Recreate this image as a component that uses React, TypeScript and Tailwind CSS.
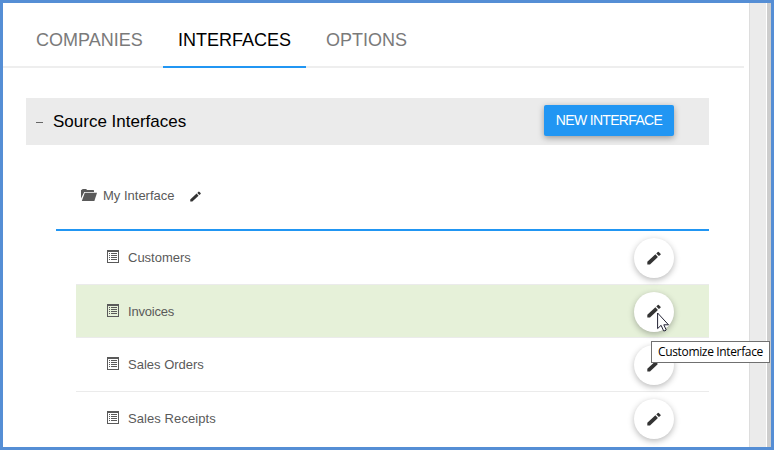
import React from "react";

const tabs = [
  { label: "COMPANIES", active: false, box: "w-[141px] pl-[14px]" },
  { label: "INTERFACES", active: true, box: "w-[143px] pl-[15px]" },
  { label: "OPTIONS", active: false, box: "w-[121px] pl-[20px]" },
];

const rows = [
  { label: "Customers", row: "h-[54px] border-b", icon: "mb-[2px]", text: "tracking-[0px]" },
  { label: "Invoices", row: "h-[53px] border-b bg-[#e6f1d9]", icon: "mb-px", text: "tracking-[-0.2px] pt-px" },
  { label: "Sales Orders", row: "h-[54px] border-b", icon: "mb-[2px]", text: "tracking-[0px]" },
  { label: "Sales Receipts", row: "h-[53px]", icon: "mb-[2px]", text: "tracking-[0.08px]" },
];

function Pencil({ className }: { className: string }) {
  return (
    <svg viewBox="0 0 14 14" className={className} fill="#333">
      <path d="M0.3 13.5v-2.8l8.1-7.4 2.5 2.6-7.9 7.6z" />
      <path d="M9.3 2.5 10.8 1q.5-.5 1 0l1.7 1.7q.5.5 0 1l-1.6 1.4z" />
    </svg>
  );
}

function ListIcon({ className }: { className: string }) {
  return (
    <svg
      viewBox="0 0 12 13"
      className={`${className} h-[13px] w-3 shrink-0`}
      shapeRendering="crispEdges"
      fill="#5a5a5a"
    >
      <path fillRule="evenodd" d="M0 0h12v13H0zM1 2h10v10H1z" />
      <path d="M2 3h1v1H2zM4 3h6v1H4zM2 5h1v1H2zM4 5h6v1H4zM2 7h1v1H2zM4 7h6v1H4zM2 9h1v1H2zM4 9h6v1H4z" />
    </svg>
  );
}

function FolderIcon() {
  return (
    <svg viewBox="0 0 16 12" className="h-3 w-4" fill="#5a5a5a">
      <path d="M0 9.5V1.2Q0 .8.6.8H1L1.6 0h3.6l.8.9h6.4q.6 0 .6.6V3H3.2z" />
      <path d="M3.8 3.8H16L13.4 12H.8z" />
    </svg>
  );
}

export default function App() {
  return (
    <div className="relative flex h-[450px] w-[774px] overflow-hidden border-[3px] border-[#558ed5] bg-white font-['Liberation_Sans',Arial,sans-serif] text-[#5a5a5a]">
      <main className="h-full w-[746px] shrink-0 overflow-hidden">
        <nav className="flex h-[65px] w-[741px] border-b-2 border-[#eee] pl-[19px]">
          {tabs.map((t) => (
            <div
              key={t.label}
              className={`${t.box} h-[65px] shrink-0 pt-[23px] text-[18px] leading-7 ${
                t.active ? "border-b-2 border-[#2196f3] text-black" : "text-[#7a7a7a]"
              }`}
            >
              <span className="whitespace-nowrap">{t.label}</span>
            </div>
          ))}
        </nav>

        <section className="mt-[30px] ml-[23px] w-[683px]">
          <header className="flex h-[47px] items-center bg-[#ebebeb] pr-[35px] pl-[10px]">
            <span className="mt-px h-px w-[7px] bg-[#666]" />
            <h2 className="ml-[10px] flex-1 text-[17px] text-black">Source Interfaces</h2>
            <button className="mb-[2px] h-[31px] w-[130px] rounded-[2px] bg-[#2196f3] text-[14px] tracking-[-0.68px] whitespace-nowrap text-white shadow-[0_2px_6px_rgba(0,0,0,0.35)]">
              NEW INTERFACE
            </button>
          </header>

          <div className="ml-[30px] flex h-[86px] items-center border-b-2 border-[#2196f3] pt-4 pl-[25px]">
            <FolderIcon />
            <span className="mt-0.5 ml-[6px] text-[13px]">My Interface</span>
            <Pencil className="mt-[3px] ml-[15px] size-[11px]" />
          </div>

          <ul className="ml-[50px]">
            {rows.map((r) => (
              <li
                key={r.label}
                className={`${r.row} flex items-center border-[#ebebeb] pr-[35px] pl-[31px]`}
              >
                <ListIcon className={r.icon} />
                <span className={`${r.text} ml-[9px] flex-1 text-[13px]`}>{r.label}</span>
                <button className="mt-px flex size-10 items-center justify-center rounded-full bg-white pb-px shadow-[0_2px_6px_rgba(0,0,0,0.28)]">
                  <Pencil className="size-[14px]" />
                </button>
              </li>
            ))}
          </ul>
        </section>
      </main>

      <div className="w-[17px] border-l border-[#ddd] bg-[#ebebeb]" />
      <div className="ml-px w-1 bg-[#cdcdcd]" />

      <svg viewBox="0 0 13 20" className="absolute top-[309px] left-[654px] h-5 w-[13px]">
        <path
          d="M.6 1v15.6l3.5-3.3 2.5 5.5q1.5.5 2.6-.9l-2.4-5.1h4.7z"
          fill="white"
          stroke="#202032"
          strokeWidth="1"
        />
      </svg>
      <div className="absolute top-[338px] left-[648px] flex h-[22px] w-[119px] items-center justify-center border border-[#707070] bg-white font-['Open_Sans','Noto_Sans',sans-serif] text-[12px] tracking-[-0.35px] whitespace-nowrap text-black">
        Customize Interface
      </div>
    </div>
  );
}
